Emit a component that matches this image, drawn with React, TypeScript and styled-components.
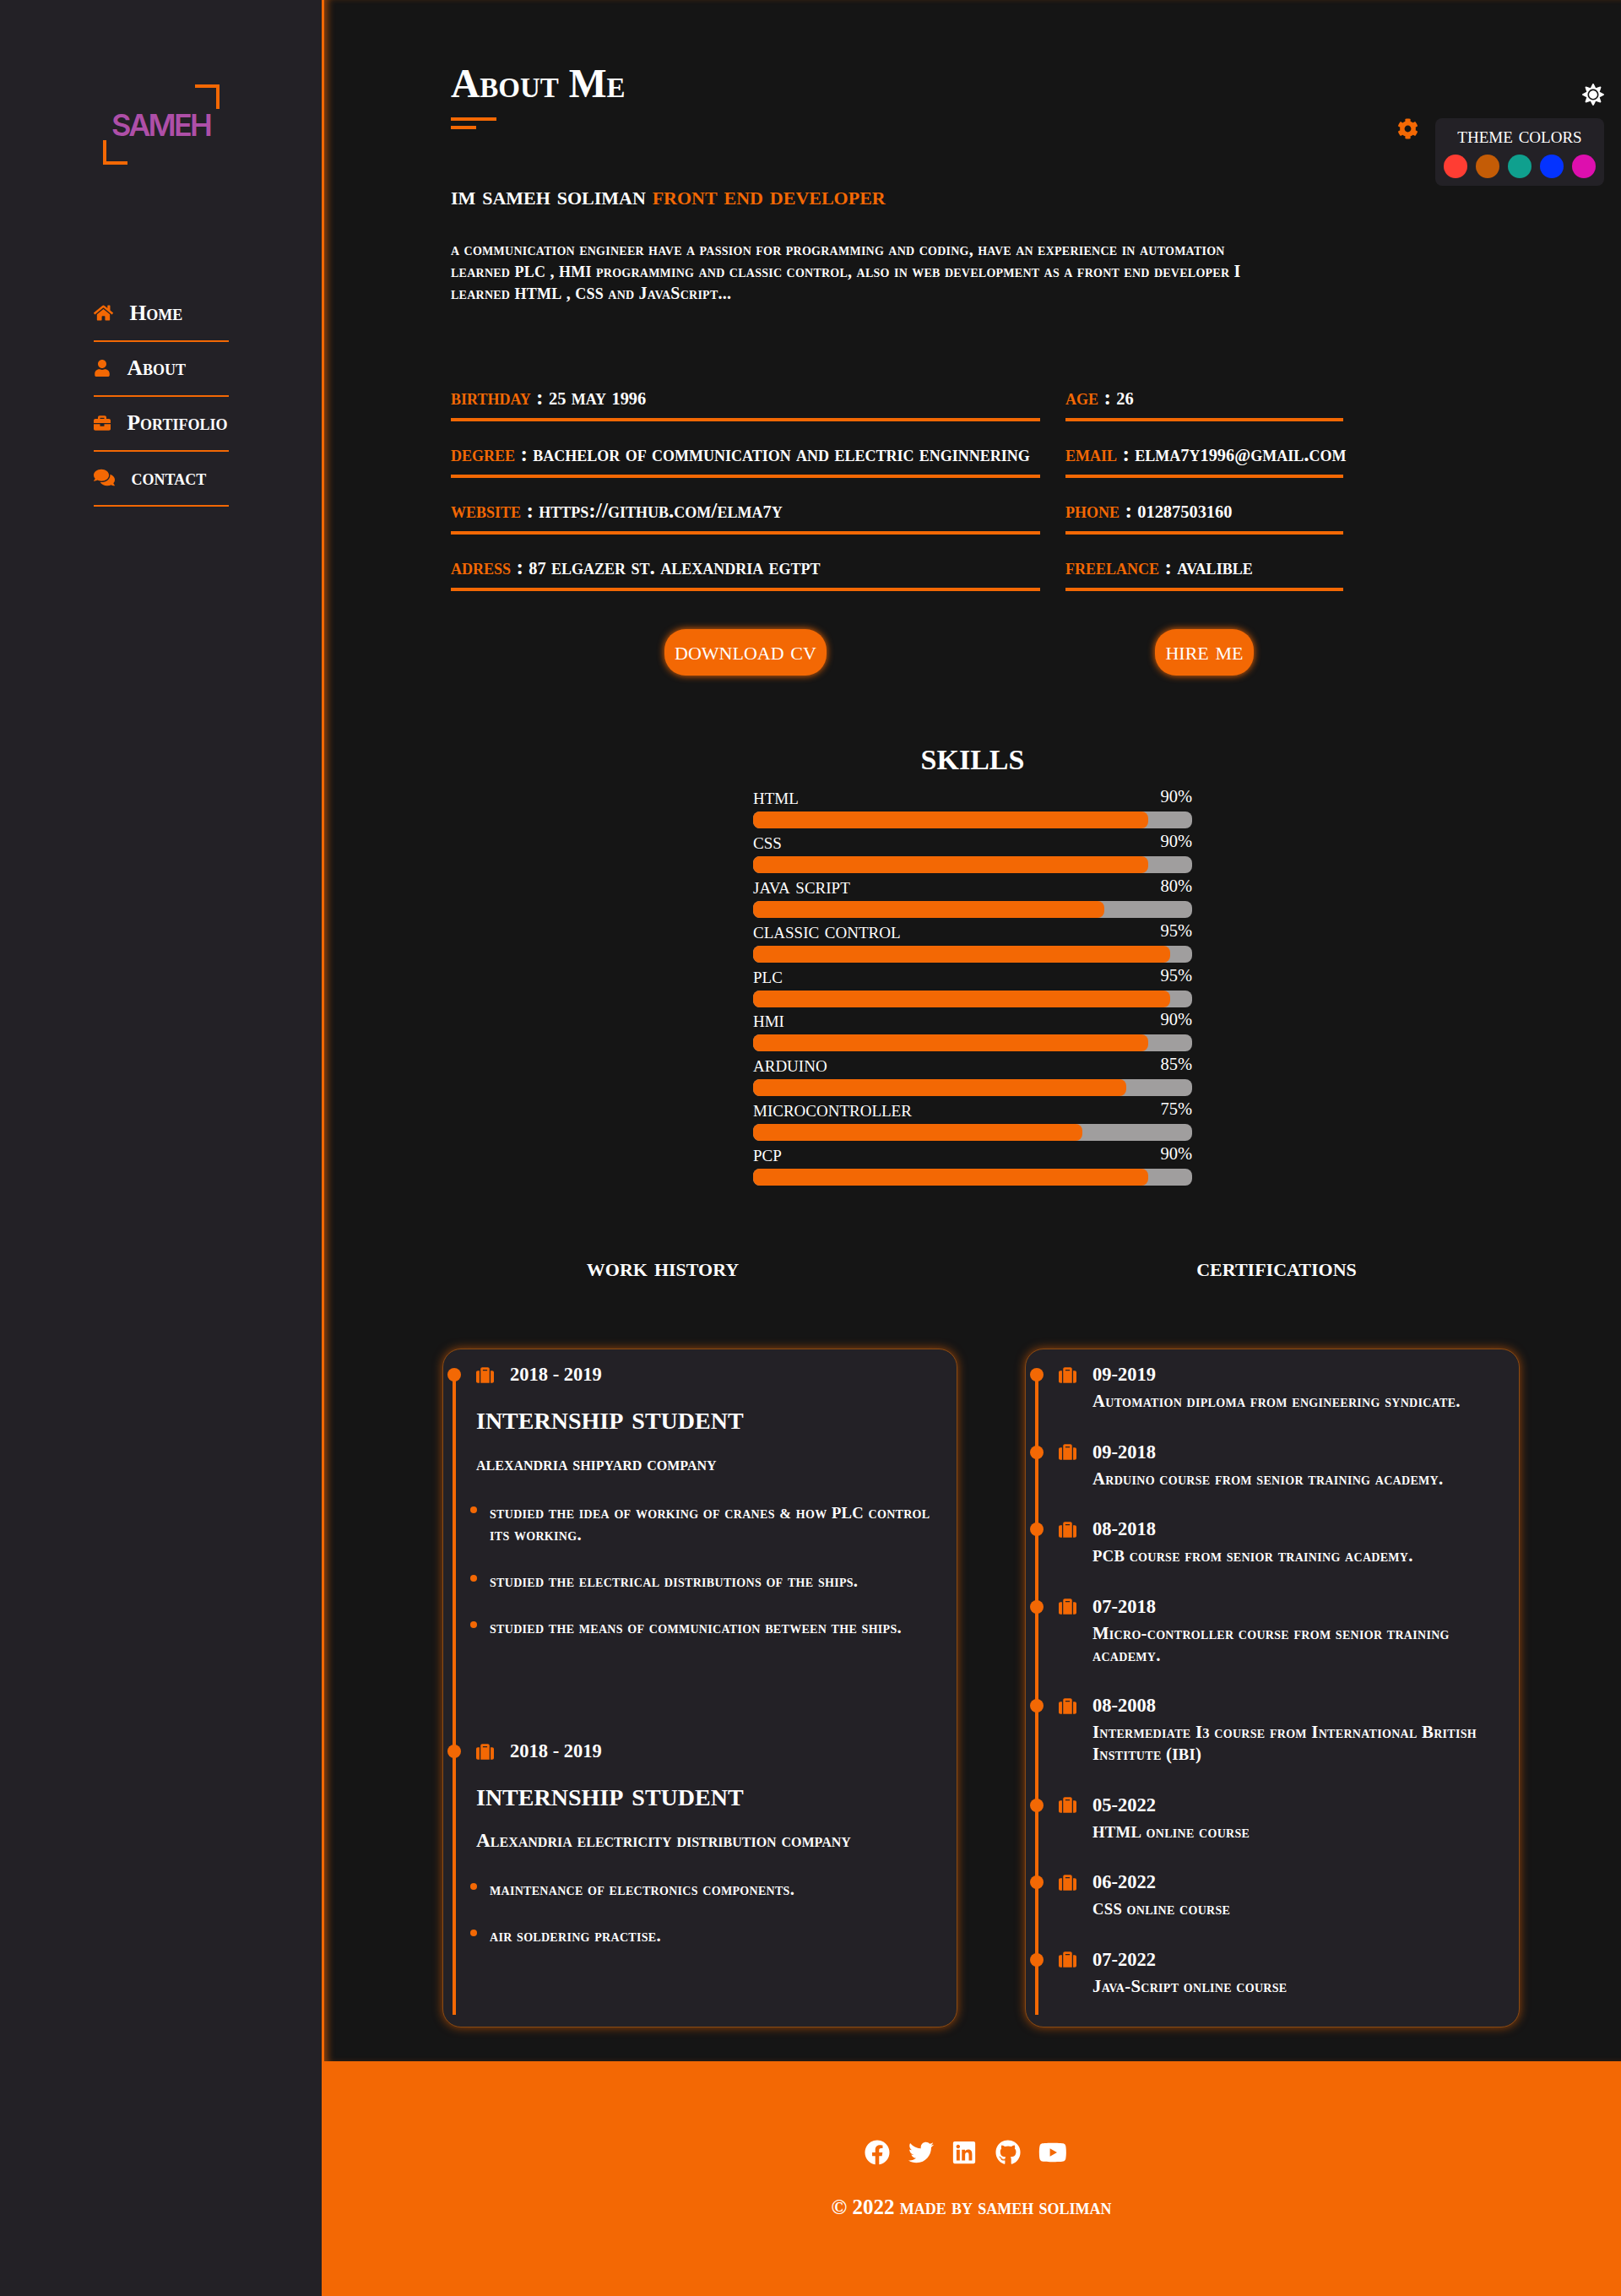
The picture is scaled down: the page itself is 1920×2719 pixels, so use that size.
import * as React from 'react';
import styled, { createGlobalStyle } from 'styled-components';
import { FaBriefcase, FaCog, FaComments, FaFacebook, FaGithub, FaHome, FaLinkedin, FaSuitcase, FaSun, FaTwitter, FaUser, FaYoutube } from 'react-icons/fa';

const ORANGE = '#f36804';
const PANEL = '#232126';
const SERIF = '"Liberation Serif", "Times New Roman", serif';

const NAV_ITEMS = [
    { label: 'Home', width: 23, icon: <FaHome size={23} /> },
    { label: 'About', width: 18, icon: <FaUser size={20} /> },
    { label: 'Portifolio', width: 20, icon: <FaBriefcase size={20} /> },
    { label: 'contact', width: 25, icon: <FaComments size={25} /> },
];

const SWATCHES = ['#ff3d33', '#c45c06', '#0fa08e', '#0433ff', '#dd0fae'];

const INFO_LEFT = [
    ['birthday', '25 may 1996'],
    ['degree', 'bachelor of communication and electric enginnering'],
    ['website', 'https://github.com/elma7y'],
    ['adress', '87 elgazer st. alexandria egtpt'],
];

const INFO_RIGHT = [
    ['age', '26'],
    ['email', 'elma7y1996@gmail.com'],
    ['phone', '01287503160'],
    ['freelance', 'avalible'],
];

const SKILLS: [string, number][] = [
    ['html', 90],
    ['css', 90],
    ['java script', 80],
    ['classic control', 95],
    ['plc', 95],
    ['hmi', 90],
    ['arduino', 85],
    ['microcontroller', 75],
    ['pcp', 90],
];

const JOBS = [
    {
        date: '2018 - 2019',
        company: 'alexandria shipyard company',
        duties: [
            'studied the idea of working of cranes & how PLC control its working.',
            'studied the electrical distributions of the ships.',
            'studied the means of communication between the ships.',
        ],
    },
    {
        date: '2018 - 2019',
        company: 'Alexandria electricity distribution company',
        duties: ['maintenance of electronics components.', 'air soldering practise.'],
    },
];

const CERTIFICATES = [
    ['09-2019', 'Automation diploma from engineering syndicate.'],
    ['09-2018', 'Arduino course from senior training academy.'],
    ['08-2018', 'PCB course from senior training academy.'],
    ['07-2018', 'Micro-controller course from senior training academy.'],
    ['08-2008', 'Intermediate I3 course from International British Institute (IBI)'],
    ['05-2022', 'HTML online course'],
    ['06-2022', 'CSS online course'],
    ['07-2022', 'Java-Script online course'],
];

// digits, symbols and runs of capitals stand much taller than the small caps of the fallback serif
const withTallRuns = (text: string) =>
    text
        .split(/([\d@&]+|[A-Z]{2,})/)
        .map((part, index) =>
            index % 2 === 1 ? (
                <TallRun key={index} $scale={/[A-Z]/.test(part) ? 0.9 : 0.8}>
                    {part}
                </TallRun>
            ) : (
                part
            ),
        );

const InfoColumn: React.FC<{ rows: string[][]; width: number }> = ({ rows, width }) => (
    <InfoList $width={width}>
        {rows.map(([label, value]) => (
            <InfoRow key={label}>
                <InfoLabel>{label}</InfoLabel> : {withTallRuns(value)}
            </InfoRow>
        ))}
    </InfoList>
);

const App: React.FC = () => (
    <Root>
        <GlobalStyle />
        <Sidebar>
            <Logo>SAMEH</Logo>
            <Nav>
                {NAV_ITEMS.map(item => (
                    <NavItem key={item.label}>
                        <NavIcon $width={item.width}>{item.icon}</NavIcon>
                        {item.label}
                    </NavItem>
                ))}
            </Nav>
        </Sidebar>
        <Main>
            <Content>
                <ThemeToggle>
                    <FaSun size={26} />
                </ThemeToggle>
                <SettingsToggle>
                    <FaCog size={25} />
                </SettingsToggle>
                <ThemePanel>
                    <ThemeTitle>theme colors</ThemeTitle>
                    <SwatchRow>
                        {SWATCHES.map(color => (
                            <Swatch key={color} $color={color} />
                        ))}
                    </SwatchRow>
                </ThemePanel>

                <PageTitle>About Me</PageTitle>
                <TitleBars />
                <Intro>
                    im sameh soliman <Accent>front end developer</Accent>
                </Intro>
                <Bio>
                    a communication engineer have a passion for programming and coding, have an experience in automation
                    <br />
                    learned {withTallRuns('PLC , HMI')} programming and classic control, also in web development as a front end developer I
                    <br />
                    learned {withTallRuns('HTML , CSS')} and JavaScript...
                </Bio>

                <InfoGrid>
                    <InfoColumn rows={INFO_LEFT} width={698} />
                    <InfoColumn rows={INFO_RIGHT} width={329} />
                </InfoGrid>
                <ButtonRow>
                    <ButtonCell $width={698}>
                        <ActionButton>download cv</ActionButton>
                    </ButtonCell>
                    <ButtonCell $width={329}>
                        <ActionButton>hire me</ActionButton>
                    </ButtonCell>
                </ButtonRow>

                <SkillsSection>
                    <SkillsTitle>skills</SkillsTitle>
                    {SKILLS.map(([name, value]) => (
                        <Skill key={name}>
                            <SkillHead>
                                <span>{name}</span>
                                <SkillValue>{value}%</SkillValue>
                            </SkillHead>
                            <SkillTrack>
                                <SkillFill style={{ width: `${value}%` }} />
                            </SkillTrack>
                        </Skill>
                    ))}
                </SkillsSection>

                <Columns>
                    <Column $width={610}>
                        <ColumnTitle $shift={-44}>work history</ColumnTitle>
                        <Card>
                            {JOBS.map((job, index) => (
                                <Job key={job.company} $last={index === JOBS.length - 1}>
                                    <EntryHead>
                                        <Dot />
                                        <SuitcaseIcon size={21} />
                                        <EntryDate>{job.date}</EntryDate>
                                    </EntryHead>
                                    <JobTitle>internship student</JobTitle>
                                    <Company>{job.company}</Company>
                                    <Duties>
                                        {job.duties.map(duty => (
                                            <Duty key={duty}>{withTallRuns(duty)}</Duty>
                                        ))}
                                    </Duties>
                                </Job>
                            ))}
                        </Card>
                    </Column>
                    <Column $width={586}>
                        <ColumnTitle $shift={5}>certifications</ColumnTitle>
                        <Card>
                            {CERTIFICATES.map(([date, text]) => (
                                <Certificate key={date + text}>
                                    <EntryHead>
                                        <Dot />
                                        <SuitcaseIcon size={21} />
                                        <EntryDate>{date}</EntryDate>
                                    </EntryHead>
                                    <CertificateText>{withTallRuns(text)}</CertificateText>
                                </Certificate>
                            ))}
                        </Card>
                    </Column>
                </Columns>
            </Content>
            <Footer>
                <SocialRow>
                    <FaFacebook size={30} />
                    <FaTwitter size={30} />
                    <FaLinkedin size={30} />
                    <FaGithub size={30} />
                    <FaYoutube size={33.75} />
                </SocialRow>
                <Copyright>© 2022 made by sameh soliman</Copyright>
            </Footer>
        </Main>
    </Root>
);

const GlobalStyle = createGlobalStyle`
    html, body {
        margin: 0;
        padding: 0;
        background: #151515;
    }
    * {
        box-sizing: border-box;
    }
`;

const Root = styled.div`
    display: flex;
    width: 1920px;
    min-height: 2719px;
    font-family: ${SERIF};
    font-variant: small-caps;
    color: #fff;
`;

const TallRun = styled.span<{ $scale: number }>`
    font-size: ${p => p.$scale}em;
    line-height: 0;
`;

const Sidebar = styled.aside`
    display: flex;
    flex-direction: column;
    align-items: center;
    flex: 0 0 381px;
    padding-top: 100px;
    background: ${PANEL};
`;

const Logo = styled.div`
    position: relative;
    display: flex;
    align-items: center;
    justify-content: center;
    width: 138px;
    height: 95px;
    font-family: Inter, sans-serif;
    font-variant: normal;
    font-size: 36px;
    font-weight: 600;
    letter-spacing: -2.8px;
    color: #ae4fa8;

    &::before,
    &::after {
        content: '';
        position: absolute;
        width: 25px;
        height: 25px;
        border: 0 solid ${ORANGE};
    }

    &::before {
        top: 0;
        right: 0;
        border-width: 4px 4px 0 0;
    }

    &::after {
        bottom: 0;
        left: 0;
        border-width: 0 0 4px 4px;
    }
`;

const Nav = styled.nav`
    display: flex;
    flex-direction: column;
    width: 160px;
    margin-top: 145px;
`;

const NavItem = styled.a`
    display: flex;
    align-items: center;
    gap: 20px;
    height: 65px;
    padding-bottom: 2px;
    border-bottom: 2px solid ${ORANGE};
    font-size: 25.5px;
    font-weight: 700;
    white-space: nowrap;
`;

const NavIcon = styled.span<{ $width: number }>`
    display: flex;
    flex: 0 0 ${p => p.$width}px;
    color: ${ORANGE};

    svg {
        flex: none;
    }
`;

const Main = styled.main`
    display: flex;
    flex-direction: column;
    flex: 1;
    min-width: 0;
`;

const Content = styled.div`
    position: relative;
    flex: 1;
    padding: 74px 0 40px 150px;
    border-left: 3px solid ${ORANGE};
    box-shadow: inset 8px 0 8px -4px rgba(243, 104, 4, 0.55);
`;

const ThemeToggle = styled.div`
    position: absolute;
    top: 99px;
    right: 20px;
    display: flex;
`;

const SettingsToggle = styled.div`
    position: absolute;
    top: 140px;
    right: 240px;
    display: flex;
    color: ${ORANGE};
`;

const ThemePanel = styled.div`
    position: absolute;
    top: 140px;
    right: 20px;
    width: 200px;
    height: 80px;
    padding: 8px 10px 0;
    border-radius: 8px;
    background: ${PANEL};
`;

const ThemeTitle = styled.div`
    height: 24px;
    font-size: 27.5px;
    line-height: 24px;
    text-align: center;
    white-space: nowrap;
`;

const SwatchRow = styled.div`
    display: flex;
    justify-content: space-between;
    margin-top: 11px;
`;

const Swatch = styled.span<{ $color: string }>`
    width: 28px;
    height: 28px;
    border-radius: 50%;
    background: ${p => p.$color};
`;

const PageTitle = styled.h1`
    margin: 0;
    font-size: 47.5px;
    font-weight: 700;
    line-height: 50px;
    white-space: nowrap;
`;

const TitleBars = styled.div`
    position: relative;
    width: 54px;
    height: 14px;
    margin-top: 15px;
    border-top: 4px solid ${ORANGE};

    &::after {
        content: '';
        position: absolute;
        top: 6px;
        left: 0;
        width: 30px;
        height: 4px;
        background: ${ORANGE};
    }
`;

const Intro = styled.h2`
    margin: 65px 0 0;
    font-size: 31.4px;
    font-weight: 700;
    line-height: 28px;
    white-space: nowrap;
`;

const Accent = styled.span`
    color: ${ORANGE};
`;

const Bio = styled.p`
    margin: 36px 0 0;
    font-size: 20px;
    font-weight: 700;
    letter-spacing: 0.25px;
    line-height: 26px;
    white-space: nowrap;
`;

const InfoGrid = styled.div`
    display: flex;
    gap: 30px;
    margin-top: 72px;
`;

const InfoList = styled.div<{ $width: number }>`
    display: flex;
    flex-direction: column;
    width: ${p => p.$width}px;
`;

const InfoRow = styled.div`
    height: 67px;
    padding-top: 24px;
    border-bottom: 4px solid ${ORANGE};
    font-size: 25.5px;
    font-weight: 700;
    line-height: 30px;
    white-space: nowrap;
`;

const InfoLabel = styled.span`
    color: ${ORANGE};
`;

const ButtonRow = styled.div`
    display: flex;
    gap: 30px;
    margin-top: 45px;
`;

const ButtonCell = styled.div<{ $width: number }>`
    display: flex;
    justify-content: center;
    width: ${p => p.$width}px;
`;

const ActionButton = styled.button`
    height: 55px;
    padding: 0 12px 4px;
    border: 0;
    border-radius: 25px;
    background: ${ORANGE};
    box-shadow: 0 0 9px ${ORANGE};
    color: #fff;
    font-family: inherit;
    font-variant: inherit;
    font-size: 31px;
    white-space: nowrap;
`;

const SkillsSection = styled.section`
    width: 520px;
    margin: 77px 0 0 358px;
`;

const SkillsTitle = styled.h2`
    margin: 0 0 20px;
    font-size: 49px;
    font-weight: 700;
    line-height: 36px;
    text-align: center;
`;

const Skill = styled.div`
    display: flex;
    flex-direction: column;
    height: 52.9px;
`;

const SkillHead = styled.div`
    display: flex;
    justify-content: space-between;
    align-items: flex-start;
    height: 28px;
    font-size: 26.7px;
    line-height: 20px;
`;

const SkillValue = styled.span`
    font-size: 20.5px;
`;

const SkillTrack = styled.div`
    height: 20px;
    border-radius: 8px;
    background: #a09e9e;
`;

const SkillFill = styled.div`
    height: 100%;
    border-radius: 8px;
    background: ${ORANGE};
`;

const Columns = styled.div`
    display: flex;
    gap: 80px;
    margin: 80px 0 0 -10px;
`;

const Column = styled.div<{ $width: number }>`
    width: ${p => p.$width}px;
`;

const ColumnTitle = styled.h3<{ $shift: number }>`
    height: 108px;
    margin: 0;
    padding-left: ${p => Math.max(p.$shift * 2, 0)}px;
    padding-right: ${p => Math.max(-p.$shift * 2, 0)}px;
    font-size: 32px;
    font-weight: 700;
    line-height: 22px;
    text-align: center;
`;

const Card = styled.div`
    position: relative;
    display: flex;
    flex-direction: column;
    height: 804px;
    padding: 20px 25px 0 39px;
    border: 1px solid #8a4a12;
    border-radius: 22px;
    background: ${PANEL};
    box-shadow: 0 0 12px rgba(243, 104, 4, 0.6);

    &::before {
        content: '';
        position: absolute;
        top: 30px;
        bottom: 14px;
        left: 11px;
        width: 4px;
        background: ${ORANGE};
    }
`;

const Job = styled.article<{ $last: boolean }>`
    height: ${p => (p.$last ? 'auto' : '446px')};
`;

const Certificate = styled.article`
    margin-bottom: 37.5px;
`;

const EntryHead = styled.div`
    position: relative;
    display: flex;
    align-items: center;
    gap: 19px;
    height: 20px;
`;

const Dot = styled.span`
    position: absolute;
    left: -34px;
    top: 2px;
    width: 16px;
    height: 16px;
    border-radius: 50%;
    background: ${ORANGE};
`;

const SuitcaseIcon = styled(FaSuitcase)`
    color: ${ORANGE};
`;

const EntryDate = styled.span`
    font-size: 22.5px;
    font-weight: 700;
    line-height: 20px;
`;

const JobTitle = styled.h4`
    margin: 27px 0 0;
    font-size: 40.2px;
    font-weight: 700;
    line-height: 28px;
    white-space: nowrap;
`;

const Company = styled.div`
    margin-top: 28px;
    font-size: 23.3px;
    font-weight: 700;
    line-height: 24px;
`;

const Duties = styled.ul`
    margin: 33px 0 0 -7px;
    padding: 0;
    list-style: none;
`;

const Duty = styled.li`
    position: relative;
    margin-bottom: 29px;
    padding-left: 23px;
    font-size: 20.7px;
    font-weight: 700;
    letter-spacing: 0.3px;
    line-height: 26px;

    &::before {
        content: '';
        position: absolute;
        top: 6px;
        left: 0;
        width: 8px;
        height: 8px;
        border-radius: 50%;
        background: ${ORANGE};
    }
`;

const CertificateText = styled.p`
    margin: 8px 0 0 40px;
    font-size: 20.7px;
    font-weight: 700;
    letter-spacing: 0.3px;
    line-height: 26px;
`;

const Footer = styled.footer`
    display: flex;
    flex-direction: column;
    align-items: center;
    height: 278px;
    padding-top: 93px;
    background: ${ORANGE};
`;

const SocialRow = styled.div`
    display: flex;
    align-items: center;
    gap: 21.5px;
    height: 30px;
    margin-left: -13px;
`;

const Copyright = styled.div`
    margin-top: 38px;
    font-size: 25px;
    font-weight: 700;
    line-height: 24px;
`;

export default App;
